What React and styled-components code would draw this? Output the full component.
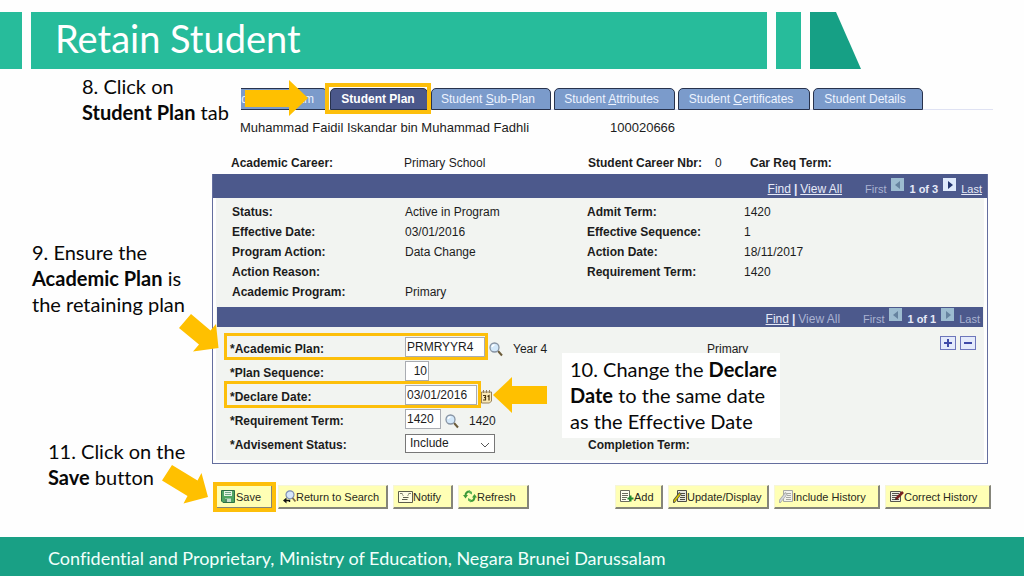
import React from "react";
import styled, { createGlobalStyle } from "styled-components";

const tabs = [
  { before: "dent Program", accessKey: "", after: "", width: 86, cut: true },
  { before: "Student Plan", accessKey: "", after: "", width: 98, active: true },
  { before: "Student ", accessKey: "S", after: "ub-Plan", width: 120 },
  { before: "Student ", accessKey: "A", after: "ttributes", width: 121 },
  { before: "Student ", accessKey: "C", after: "ertificates", width: 132 },
  { before: "Student Details", accessKey: "", after: "", width: 110 },
];

const details = [
  ["Status:", "Active in Program", "Admit Term:", "1420"],
  ["Effective Date:", "03/01/2016", "Effective Sequence:", "1"],
  ["Program Action:", "Data Change", "Action Date:", "18/11/2017"],
  ["Action Reason:", "", "Requirement Term:", "1420"],
  ["Academic Program:", "Primary", "", ""],
];

function App() {
  return (
    <Page>
      <GlobalStyle />
      <Header>
        <Block $width={22} />
        <TitleBar>
          <Title>Retain Student</Title>
        </TitleBar>
        <Block $width={25} />
        <Wedge />
      </Header>
      <Body>
        <Notes>
          <Note $indent={82} $space={114}>
            8. Click on
            <br />
            <b>Student Plan</b> tab
          </Note>
          <Note $indent={32} $space={121}>
            9. Ensure the
            <br />
            <b>Academic Plan</b> is
            <br />
            the retaining plan
          </Note>
          <Note $indent={48} $space={0}>
            11. Click on the
            <br />
            <b>Save</b> button
          </Note>
        </Notes>
        <Main>
          <TabRow>
            {tabs.map((tab) => (
              <Tab
                href="#"
                key={tab.before + tab.accessKey + tab.after}
                $width={tab.width}
                $active={tab.active}
                $cut={tab.cut}
              >
                <span>
                  {tab.before}
                  {tab.accessKey && <u>{tab.accessKey}</u>}
                  {tab.after}
                </span>
              </Tab>
            ))}
            <TabFrame />
            <TabArrow viewBox="0 0 64 36">
              <path d="M0 10H44V0L63 18L44 36V27H0Z" />
            </TabArrow>
          </TabRow>
          <NameRow>
            <span>Muhammad Faidil Iskandar bin Muhammad Fadhli</span>
            <span>100020666</span>
          </NameRow>
          <CareerRow>
            <b>Academic Career:</b>
            <span>Primary School</span>
            <b>Student Career Nbr:</b>
            <span>0</span>
            <b>Car Req Term:</b>
          </CareerRow>
          <Panel>
            <Pager viewAll count="1 of 3" next />
            <PanelBody>
              <Details>
                {details.map(([label, value, label2, value2]) => (
                  <React.Fragment key={label}>
                    <dt>{label}</dt>
                    <dd>{value}</dd>
                    <dt>{label2}</dt>
                    <dd>{value2}</dd>
                  </React.Fragment>
                ))}
              </Details>
              <Pager inner count="1 of 1" />
              <Form>
                <AddRemove>
                  <SquareButton type="button" aria-label="Add row">
                    <svg width="10" height="10" viewBox="0 0 10 10">
                      <path d="M5 1V9M1 5H9" stroke="#3f4aa8" strokeWidth="2" />
                    </svg>
                  </SquareButton>
                  <SquareButton type="button" aria-label="Delete row">
                    <svg width="10" height="10" viewBox="0 0 10 10">
                      <path d="M1 5H9" stroke="#3f4aa8" strokeWidth="2" />
                    </svg>
                  </SquareButton>
                </AddRemove>
                <Field $frame={264}>
                  <label htmlFor="plan">*Academic Plan:</label>
                  <Controls>
                    <TextBox id="plan" $width={80} defaultValue="PRMRYYR4" />
                    <LookupIcon />
                    <span>Year 4</span>
                  </Controls>
                  <span />
                  <span>Primary</span>
                  <PlanArrow viewBox="0 0 40 38">
                    <path d="M12 0L31.500 16.500L37 10L39.500 34L14 37.500L20 30.500L0 14Z" />
                  </PlanArrow>
                </Field>
                <Field>
                  <label htmlFor="sequence">*Plan Sequence:</label>
                  <Controls>
                    <TextBox id="sequence" $width={24} $right defaultValue="10" />
                  </Controls>
                </Field>
                <Field $frame={257}>
                  <label htmlFor="declare">*Declare Date:</label>
                  <Controls>
                    <TextBox id="declare" $width={72} defaultValue="03/01/2016" />
                    <CalendarIcon />
                  </Controls>
                  <DateArrow viewBox="0 0 54 36">
                    <path d="M0 18L19 0V9H54V27H19V36Z" />
                  </DateArrow>
                </Field>
                <Field>
                  <label htmlFor="term">*Requirement Term:</label>
                  <Controls>
                    <TextBox id="term" $width={36} defaultValue="1420" />
                    <LookupIcon />
                    <span>1420</span>
                  </Controls>
                </Field>
                <Field>
                  <label htmlFor="status">*Advisement Status:</label>
                  <Controls>
                    <SelectWrap>
                      <Select id="status" defaultValue="Include">
                        <option>Include</option>
                      </Select>
                      <svg width="10" height="6" viewBox="0 0 10 6">
                        <path d="M1 1L5 5L9 1" fill="none" stroke="#555" />
                      </svg>
                    </SelectWrap>
                  </Controls>
                  <b>Completion Term:</b>
                </Field>
                <Callout>
                  10. Change the <b>Declare</b>
                  <br />
                  <b>Date</b> to the same date
                  <br />
                  as the Effective Date
                </Callout>
              </Form>
            </PanelBody>
          </Panel>
          <Actions>
            <ActionGroup>
              <SaveWrap>
                <Action $width={57}>
                  <SaveIcon />
                  Save
                </Action>
                <SaveArrow viewBox="0 0 46 40">
                  <path d="M10 0L35.500 15.500L39.500 8L46 32L21.500 38.500L25.500 31L0 15.500Z" />
                </SaveArrow>
              </SaveWrap>
              <Action $width={110}>
                <ReturnIcon />
                Return to Search
              </Action>
              <Action $width={60}>
                <NotifyIcon />
                Notify
              </Action>
              <Action $width={71}>
                <RefreshIcon />
                Refresh
              </Action>
            </ActionGroup>
            <ActionGroup>
              <Action $width={48}>
                <AddIcon />
                Add
              </Action>
              <Action $width={101}>
                <PageIcon pencil="#d8c400" />
                Update/Display
              </Action>
              <Action $width={106}>
                <PageIcon pencil="#d5d8de" faded />
                Include History
              </Action>
              <Action $width={106}>
                <CorrectIcon />
                Correct History
              </Action>
            </ActionGroup>
          </Actions>
        </Main>
      </Body>
      <Footer>
        Confidential and Proprietary, Ministry of Education, Negara Brunei
        Darussalam
      </Footer>
    </Page>
  );
}

function Pager({ inner, viewAll, count, next }) {
  return (
    <PagerBar $inner={inner}>
      <PagerLinks>
        <a href="#">Find</a>
        <b>|</b>
        {viewAll ? <a href="#">View All</a> : <Dim>View All</Dim>}
      </PagerLinks>
      <Dim>First</Dim>
      <Step type="button" aria-label="Previous" disabled>
        <svg width="6" height="8" viewBox="0 0 6 8">
          <path d="M5 0V8L0 4Z" fill="#66839f" />
        </svg>
      </Step>
      <Count>{count}</Count>
      <Step type="button" aria-label="Next" disabled={!next}>
        <svg width="6" height="8" viewBox="0 0 6 8">
          <path d="M1 0V8L6 4Z" fill={next ? "#24366f" : "#66839f"} />
        </svg>
      </Step>
      {next ? <a href="#">Last</a> : <Dim>Last</Dim>}
    </PagerBar>
  );
}

function LookupIcon() {
  return (
    <svg width="14" height="15" viewBox="0 0 14 15">
      <path d="M9 9L13 13.500" stroke="#6b5b3a" strokeWidth="2" />
      <circle cx="5.500" cy="5.500" r="4.500" fill="#d3e8fa" stroke="#8793a3" strokeWidth="1.300" />
      <path d="M3 5Q3.500 3 5.500 3" fill="none" stroke="#fff" strokeWidth="1.300" />
    </svg>
  );
}

function CalendarIcon() {
  return (
    <svg width="11" height="14" viewBox="0 0 11 14">
      <path d="M.5 2H10.500V11L8.500 13H.5Z" fill="#fbe9b6" stroke="#96805a" />
      <path d="M2.500 0V3M5.500 0V3M8.500 0V3" stroke="#96805a" />
      <path
        d="M2 5.500H4.500V7.500H3M4.500 7.500V10H2M6.500 6.500L8 5.500V10.500"
        fill="none"
        stroke="#4b3510"
        strokeWidth="1.200"
      />
    </svg>
  );
}

function SaveIcon() {
  return (
    <svg width="15" height="13" viewBox="0 0 15 13">
      <path d="M.5 .5H13.500V12.500H2L.5 11Z" fill="#4fa563" stroke="#2c6e46" />
      <path d="M3 1H11V6H3Z" fill="#e4f3e4" />
      <path d="M4 2.500H10M4 4.500H10" stroke="#6fa887" />
      <path d="M4 8.500H10V12H4Z" fill="#c6dccb" />
      <path d="M5 9V12" stroke="#2c6e46" strokeWidth="1.500" />
    </svg>
  );
}

function ReturnIcon() {
  return (
    <svg width="13" height="14" viewBox="0 0 13 14">
      <circle cx="7" cy="4.800" r="4" fill="#d5e6fb" stroke="#7f8fb4" strokeWidth="1.200" />
      <path d="M9.500 8L12.500 11.500" stroke="#7c6a48" strokeWidth="1.800" />
      <path d="M2 10.500H6.500V12" fill="none" stroke="#111" strokeWidth="1.400" />
      <path d="M0 10.500L3.500 7.500V13.500Z" fill="#111" />
    </svg>
  );
}

function NotifyIcon() {
  return (
    <svg width="15" height="12" viewBox="0 0 15 12">
      <path d="M.5 .5H14.500V11.500H.5Z" fill="#fffde2" stroke="#5d5d4b" />
      <path d="M2 2.500H4.500M10.500 2.500H13M4 3.500L5.500 4.500M9.500 4.500L11 3.500" stroke="#7d7d6b" />
      <path d="M5 6.500H10.500M4 8.500H9.500" stroke="#5d5d4b" />
    </svg>
  );
}

function RefreshIcon() {
  return (
    <svg width="14" height="13" viewBox="0 0 14 13">
      <path
        d="M6.500 1.500Q2.500 1.500 2.500 6M7.500 11Q11.500 11 11.500 6.500"
        fill="none"
        stroke="#3f9b3a"
        strokeWidth="2"
      />
      <path d="M0 5H5L2.500 8.500ZM9 7.500H14L11.500 4Z" fill="#3f9b3a" />
      <path d="M6 0L9 2V4.500L6 3ZM8 12.500L5 10.500V8L8 9.500Z" fill="#5cb356" />
    </svg>
  );
}

function AddIcon() {
  return (
    <svg width="14" height="13" viewBox="0 0 14 13">
      <path d="M.5 .5H9.500V11.500H.5Z" fill="#fffef0" stroke="#6b6b5e" />
      <path d="M2 3.500H8M2 5.500H8M2 7.500H7M2 9.500H6" stroke="#6b6b5e" />
      <path d="M10.500 5.500V11.500M7.500 8.500H13.500" stroke="#1e8b2f" strokeWidth="2" />
    </svg>
  );
}

function PageIcon({ pencil, faded }) {
  const line = faded ? "#a6a9a3" : "#4d4d45";
  return (
    <svg width="14" height="13" viewBox="0 0 14 13">
      <path d="M4.500 .5H13.500V11.500H4.500Z" fill={faded ? "#f3f3ee" : "#e9e9df"} stroke={line} />
      <path d="M8 3.500H12M8 5.500H12M7 7.500H12M7 9.500H12" stroke={line} />
      <path d="M0 12.500L7.500 3" stroke={line} strokeWidth="3" />
      <path d="M1 11.500L7 3.800" stroke={pencil} strokeWidth="1.600" />
    </svg>
  );
}

function CorrectIcon() {
  return (
    <svg width="14" height="13" viewBox="0 0 14 13">
      <path d="M.5 1.500H10.500V11.500H.5Z" fill="#eeeee2" stroke="#55554d" />
      <path d="M2 3.500H9M2 5.500H8M2 7.500H6M2 9.500H9" stroke="#55554d" />
      <path d="M6 9L13 2" stroke="#7a2020" strokeWidth="2.600" />
      <path d="M5 10L7 9.500L5.500 8Z" fill="#222" />
    </svg>
  );
}

const GlobalStyle = createGlobalStyle`
  *, *::after {
    box-sizing: border-box;
  }
  body {
    margin: 0;
    background: #fefefe;
    color: #1c1c1c;
    font-family: "Liberation Sans", Arial, sans-serif;
    font-size: 12px;
  }
`;

const Page = styled.div`
  display: flex;
  flex-direction: column;
  min-height: 100vh;
`;

const Header = styled.header`
  display: flex;
  gap: 9px;
  height: 57px;
  margin-top: 12px;
  padding-right: 163px;
`;

const Block = styled.div`
  width: ${({ $width }) => $width}px;
  background: #27bc9b;
`;

const TitleBar = styled.div`
  display: flex;
  flex: 1;
  align-items: center;
  padding-left: 24px;
  background: #27bc9b;
`;

const Title = styled.h1`
  margin: 0;
  padding-bottom: 6px;
  color: white;
  font-family: Lato, sans-serif;
  font-size: 38px;
  font-weight: 400;
  line-height: 44px;
`;

const Wedge = styled.div`
  width: 51px;
  background: #16a085;
  clip-path: polygon(0 0, 51% 0, 100% 100%, 0 100%);
`;

const Body = styled.div`
  display: flex;
  flex: 1;
`;

const Notes = styled.aside`
  width: 212px;
  padding-top: 4px;
  color: #080808;
`;

const Note = styled.p`
  margin: 0 0 ${({ $space }) => $space}px;
  padding-left: ${({ $indent }) => $indent}px;
  font-family: Lato, sans-serif;
  font-size: 20px;
  font-variant-ligatures: none;
  line-height: 26px;
  white-space: nowrap;
`;

const Main = styled.main`
  flex: 1;
  padding: 19px 36px 28px 0;
`;

const TabRow = styled.nav`
  position: relative;
  display: flex;
  gap: 3px;
  height: 22px;
  margin: 0 -5px 0 29px;
  border-bottom: 1px solid #dfe2f3;
`;

const Tab = styled.a`
  display: flex;
  justify-content: ${({ $cut }) => ($cut ? "flex-end" : "center")};
  width: ${({ $width }) => $width}px;
  height: 22px;
  padding-right: ${({ $cut, $active }) => ($cut ? 12 : $active ? 2 : 6)}px;
  border: 1px solid #28324c;
  border-left-width: ${({ $cut }) => ($cut ? 0 : 1)}px;
  border-radius: ${({ $cut }) => ($cut ? "0 5px 0 0" : "5px 5px 0 0")};
  background: ${({ $active }) => ($active ? "#4b588b" : "#7b9bcb")};
  color: ${({ $active }) => ($active ? "white" : "#edf3ff")};
  font-weight: ${({ $active }) => ($active ? "bold" : "normal")};
  line-height: 20px;
  text-decoration: none;
  white-space: nowrap;
`;

const TabFrame = styled.div`
  position: absolute;
  top: -5px;
  left: 84px;
  width: 106px;
  height: 31px;
  border: 4px solid #fdbf0b;
`;

const Arrow = styled.svg`
  position: absolute;
  z-index: 2;
  fill: #ffc000;
`;

const TabArrow = styled(Arrow)`
  top: -8px;
  left: 4px;
  width: 64px;
  height: 36px;
`;

const NameRow = styled.div`
  display: grid;
  grid-template-columns: 370px 1fr;
  padding-left: 28px;
  font-size: 13px;
  line-height: 35px;
`;

const CareerRow = styled.div`
  display: grid;
  grid-template-columns: 173px 184px 127px 35px 1fr;
  margin-top: 7px;
  padding-left: 19px;
  line-height: 22px;
`;

const Panel = styled.section`
  border: 1px solid #646e9e;
  border-top: 0;
`;

const PagerBar = styled.div`
  display: flex;
  align-items: center;
  justify-content: flex-end;
  gap: 5px;
  height: ${({ $inner }) => ($inner ? 20 : 24)}px;
  margin-top: ${({ $inner }) => ($inner ? 5 : 0)}px;
  padding: ${({ $inner }) => ($inner ? "3px 3px 0 0" : "5px 5px 0 0")};
  background: #4c598c;
  color: #e6eaf8;
  font-size: 11px;
  a {
    color: #e6eaf8;
  }
`;

const PagerLinks = styled.span`
  display: flex;
  gap: 3px;
  margin-right: 18px;
  font-size: 12px;
`;

const Dim = styled.span`
  color: #aab3d2;
`;

const Count = styled.b`
  font-size: 11px;
`;

const Step = styled.button`
  display: flex;
  align-items: center;
  justify-content: center;
  width: 13px;
  height: 13px;
  margin-bottom: 8px;
  padding: 0;
  border: 0;
  background: ${({ disabled }) => (disabled ? "#9dbcd0" : "#dfeafb")};
`;

const PanelBody = styled.div`
  margin: 0 3px 3px;
  padding: 4px 1px 3px;
  background: #f2f4f1;
`;

const Details = styled.dl`
  display: grid;
  grid-template-columns: 173px 182px 157px 1fr;
  margin: 0;
  padding-left: 15px;
  line-height: 20px;
  dt {
    font-weight: bold;
  }
  dd {
    height: 20px;
    margin: 0;
  }
`;

const Form = styled.form`
  position: relative;
  padding: 10px 0 0 13px;
`;

const Field = styled.div`
  position: relative;
  display: grid;
  grid-template-columns: 175px 183px 119px 1fr;
  align-items: center;
  height: 24px;
  label {
    font-weight: bold;
  }
  &::after {
    content: "";
    display: ${({ $frame }) => ($frame ? "block" : "none")};
    position: absolute;
    top: -4px;
    left: -6px;
    width: ${({ $frame }) => $frame}px;
    height: 27px;
    border: 3px solid #fdbf0b;
    pointer-events: none;
  }
`;

const Controls = styled.div`
  display: flex;
  align-items: center;
  gap: 4px;
  svg + span {
    margin-left: 6px;
  }
`;

const TextBox = styled.input`
  width: ${({ $width }) => $width}px;
  height: 20px;
  margin-bottom: 4px;
  padding: 0 1px;
  border: 1px solid #a9acb2;
  border-radius: 0;
  background: white;
  color: #1c1c1c;
  font: inherit;
  text-align: ${({ $right }) => ($right ? "right" : "left")};
`;

const SelectWrap = styled.span`
  position: relative;
  svg {
    position: absolute;
    right: 5px;
    top: 8px;
  }
`;

const Select = styled.select`
  appearance: none;
  width: 90px;
  height: 19px;
  margin-bottom: 4px;
  padding: 0 4px;
  border: 1px solid #777;
  border-radius: 0;
  background: white;
  color: #1c1c1c;
  font: inherit;
`;

const PlanArrow = styled(Arrow)`
  top: -23px;
  left: -51px;
  width: 40px;
  height: 38px;
`;

const DateArrow = styled(Arrow)`
  top: -8px;
  left: 263px;
  width: 54px;
  height: 36px;
`;

const AddRemove = styled.div`
  position: absolute;
  z-index: 1;
  top: 9px;
  right: 7px;
  display: flex;
  gap: 4px;
`;

const SquareButton = styled.button`
  display: flex;
  align-items: center;
  justify-content: center;
  width: 16px;
  height: 14px;
  padding: 0;
  border: 1px solid #6d76bb;
  background: #e4eafb;
`;

const Callout = styled.p`
  position: absolute;
  z-index: 1;
  top: 26px;
  left: 345px;
  margin: 0;
  padding: 3px 8px 4px;
  width: 218px;
  background: white;
  color: #080808;
  font-family: Lato, sans-serif;
  font-size: 20px;
  font-variant-ligatures: none;
  line-height: 26px;
  white-space: nowrap;
`;

const Actions = styled.div`
  display: flex;
  justify-content: space-between;
  margin: 21px -3px 0 4px;
`;

const ActionGroup = styled.div`
  display: flex;
  gap: 5px;
`;

const Action = styled.button`
  display: flex;
  align-items: center;
  width: ${({ $width }) => $width}px;
  height: 24px;
  padding: 0 0 0 4px;
  border: solid;
  border-width: 1px 2px 2px 1px;
  border-color: #f6f6d8 #85857a #85857a #f6f6d8;
  background: #ffffb5;
  color: #2a2a1c;
  font-family: inherit;
  font-size: 11px;
  white-space: nowrap;
  svg {
    flex-shrink: 0;
  }
`;

const SaveWrap = styled.div`
  position: relative;
  &::after {
    content: "";
    position: absolute;
    inset: -3px;
    border: 4px solid #fdbf0b;
    pointer-events: none;
  }
`;

const SaveArrow = styled(Arrow)`
  top: -20px;
  left: -54px;
  width: 46px;
  height: 40px;
`;

const Footer = styled.footer`
  padding: 8px 48px 5px;
  background: #19a085;
  color: #f2fffb;
  font-family: Lato, sans-serif;
  font-size: 18px;
  font-variant-ligatures: none;
  line-height: 26px;
`;

export default App;
